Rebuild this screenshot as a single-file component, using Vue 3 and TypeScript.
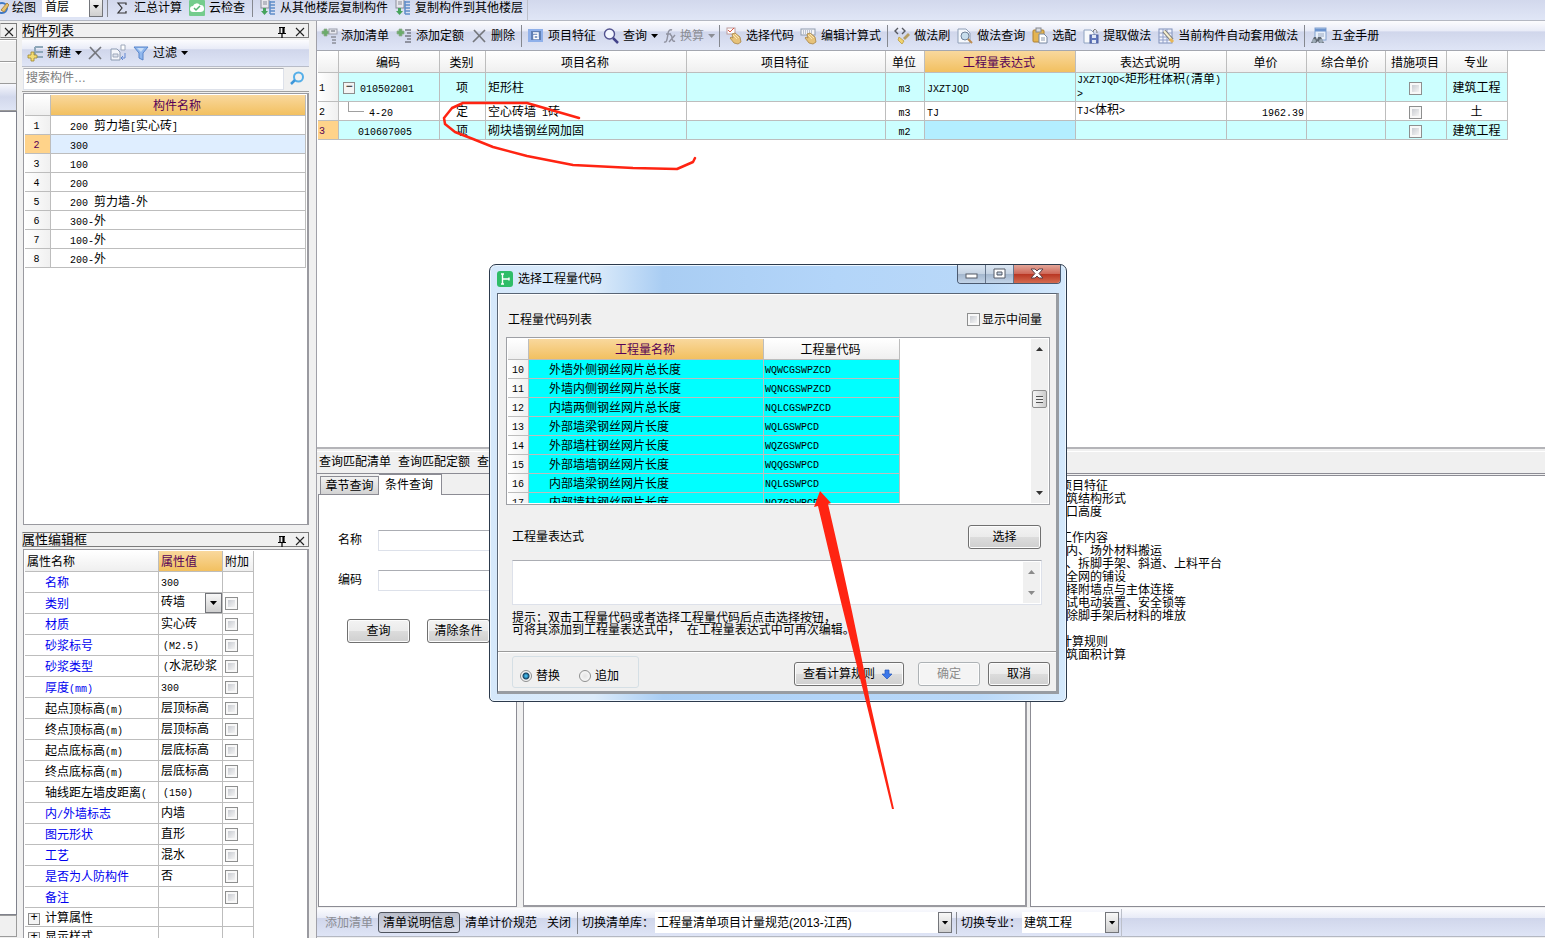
<script setup lang="ts">
import { h, ref } from 'vue'

const Mix = (props: { t: string }) =>
  h('span', { class: 'mix' }, props.t.split(/([\x20-\x7e]+)/).filter(Boolean).map((part) =>
    /^[\x20-\x7e]+$/.test(part) ? h('span', { class: 'lat' }, part) : part))
Mix.props = ['t']

const hand = '<path d="M6 6l3-1 5 4 1 5-3 2-4-1-4-5 1-1 2 1z" fill="#e6c27a" stroke="#a98545" stroke-width=".8"/><path d="M7 7l4 4M9 6l4 4" stroke="#fff0c8" stroke-width=".8"/>'
const plus = '<path d="M3 1h3v2h2v3h-2v2h-3v-2h-2v-3h2z" fill="#6bab6b" stroke="#8fae90" stroke-width=".7"/>'
const icons: Record<string, string> = {
  brush: '<circle cx="2" cy="8" r="5" fill="none" stroke="#3e78c4" stroke-width="2"/><path d="M1 10l6-7 2 2-5 7z" fill="#e8c36b" stroke="#a98447"/>',
  sigma: '<path d="M11 5v-2h-8l4 5-4 5h8v-2" fill="none" stroke="#333" stroke-width="1.2"/>',
  cloud: '<rect width="16" height="16" rx="1" fill="#74cc8d"/><path d="M4 12a3 3 0 0 1 0-6 4 4 0 0 1 7-1 3.500 3.500 0 0 1 1 7z" fill="#fff"/><path d="M5 8l2 2 4-4" fill="none" stroke="#55b573" stroke-width="1.500"/>',
  copyFloor: '<rect x="1" y="-1" width="8" height="9" fill="#e8e8ee" stroke="#8b8d99"/><path d="M3 2h4M3 4h4" stroke="#8b8d99"/><path d="M10 1v13M10 2h5M10 5h5M10 8h5M10 11h5M10 14h5" stroke="#5f8dc9" stroke-width="1.500"/><path d="M3 8h3v3h2l-3.500 4-3.500-4h2z" fill="#46a35c"/>',
  newItem: '<path d="M8 2h8M8 7h8M8 12h8M8 2v10" stroke="#8ea7b9" stroke-width="2" fill="none"/><path d="M4 7h3v3h3v3h-3v3h-3v-3h-3v-3h3z" fill="#f3dc72" stroke="#9c8730" stroke-width=".8"/>',
  cross: '<path d="M3 2l11 12M14 2l-12 12" stroke="#75777d" stroke-width="1.700" fill="none"/>',
  duplicate: '<path d="M1 4h6l3 3v8h-9z" fill="#f4f6fa" stroke="#8c9bb2"/><path d="M3 9h5v3h-5z" fill="#dfe4ee" stroke="#9da8ba"/><path d="M11 0h4v5h-4z" fill="#fff" stroke="#9da8ba"/><path d="M15 8v5h-3m1-2l-2 2 2 2" stroke="#6187d2" fill="none"/>',
  filter: '<path d="M1 2h14l-5 6v7l-4-2v-5z" fill="#91b8ee" stroke="#5885ca"/><path d="M4 3h7l-3 4z" fill="#c9def8"/>',
  search: '<circle cx="9.500" cy="6" r="4.500" fill="none" stroke="#54aee8" stroke-width="2"/><path d="M6 9l-4 4" stroke="#3d97da" stroke-width="2.500"/>',
  addList: plus + '<rect x="8" y="1" width="8" height="5" fill="#e7e8ef" stroke="#9a9dab"/><path d="M10 3h4M10 9h5M11 12h4M11 15h4" stroke="#8c8e99" stroke-width="1.500"/>',
  addQuota: plus + '<path d="M9 2h6M11 5h4M9 8h6M11 11h4M9 14h6" stroke="#777984" stroke-width="1.400"/>',
  feature: '<rect x="0" y="1" width="15" height="13" fill="#8fb0ea"/><rect x="3" y="3" width="10" height="9" fill="#5f7fb4"/><path d="M5 5h5v6M10 7.500h-4v3h5" stroke="#fff" stroke-width="1.500" fill="none"/>',
  magnify: '<circle cx="6.500" cy="6" r="5" fill="#f3f6ff" stroke="#52528f" stroke-width="1.400"/><path d="M10 10l5 5" stroke="#42428a" stroke-width="2.500"/>',
  fx: '<path d="M1 14c3 1 3-3 4-8 0-3 2-5 4-4M3 6h5M6 14l6-7M7 7c3-1 1 8 5 6" fill="none" stroke="#9092a0" stroke-width="1.400"/>',
  pick: '<rect x="1" y="0" width="8" height="6" fill="#fff" stroke="#bd9c9c"/><path d="M2 2l2 2 4-4" stroke="#dd5545" fill="none"/>' + hand,
  edit: '<rect x="0" y="1" width="14" height="6" fill="#f4f4f8" stroke="#8f9bad"/><path d="M2 3h10M2 5h10" stroke="#8392aa" stroke-dasharray="1 1"/>' + hand,
  code: '<path d="M4 0l-3 3 3 3M8 0l3 3-3 3" fill="none" stroke="#56585f" stroke-width="1.400"/><path d="M9 10l5-5 2 2-5 5z" fill="#b69e62"/><path d="M5 9l5 4-2 3-4-4z" fill="#f1d36f" stroke="#c4a852"/>',
  pageFind: '<path d="M1 1h8l4 4v10h-12z" fill="#f5f8fd" stroke="#8f9fb7"/><circle cx="8" cy="8" r="4" fill="#c7ddec" stroke="#6f8199"/><path d="M11 11l4 4" stroke="#be8c50" stroke-width="2"/>',
  clipboard: '<rect x="1" y="2" width="11" height="12" rx="1" fill="#e4b451" stroke="#af8131"/><rect x="4" y="0" width="5" height="4" fill="#d9dde4" stroke="#85878c"/><path d="M7 6h5l3 3v6h-8z" fill="#fff" stroke="#7787a0"/><path d="M9 10h4M9 12h4" stroke="#8c9ab0"/>',
  extract: '<path d="M1 2h7l3 3v10h-10z" fill="#f7f9fc" stroke="#8ea2c0"/><rect x="7" y="7" width="8" height="8" fill="#6278bd" stroke="#4b5e9d"/><path d="M9 7h4v3h-4zM9 12h4v3h-4z" fill="#dfe7f5"/><path d="M10 4c1-4 4-3 4 1M12 1l-2 2" fill="none" stroke="#777"/>',
  auto: '<rect x="1" y="1" width="13" height="14" fill="#f0f3fd" stroke="#7f8fba"/><path d="M1 5h13M1 9h13M1 12h13M5 1v14M9 1v14" stroke="#91a0c8"/><path d="M6 3l8 9" stroke="#777" stroke-width="4"/><path d="M6 3l8 9" stroke="#f7f0d0" stroke-width="2"/><path d="M12 11l3 3" stroke="#e7b758" stroke-width="3"/>',
  manual: '<rect x="4" y="0" width="11" height="12" fill="#e9f0fa" stroke="#82a1ce"/><path d="M4 2h11" stroke="#6d94cf" stroke-width="3"/><path d="M7 6h6M7 8h6" stroke="#99a9c2"/><path d="M0 15l3-6h2l1 3 1-3h3l3 6h-5l-1-2-2 2z" fill="#5f6872"/><circle cx="3" cy="13" r="2" fill="#9eabb7"/><circle cx="10" cy="13" r="2" fill="#9eabb7"/>',
  pin: '<path d="M5 3.500h6M6 3v6M10 3v6M9 3v6M4 9.500h8M8 10v4" stroke="#000" fill="none" stroke-width="1.200"/>',
  close: '<path d="M4 4l8 8M12 4l-8 8" stroke="#222" stroke-width="1.100" fill="none"/>',
  app: '<rect width="16" height="16" rx="3" fill="#2fbd68"/><path d="M4 3h3M5.500 3v10M4 13h3M6 8h6M12 6.500v3" stroke="#fff" stroke-width="1.400" fill="none"/>',
  down: '<path d="M6 4h4v4h3l-5 5-5-5h3z" fill="#3d78ea" stroke="#2456b8" stroke-width=".7"/>',
}
const Icon = (props: { n: string; w?: number }) =>
  h('svg', { class: 'icon', width: props.w || 16, height: 16, viewBox: `0 0 ${props.w || 16} 16`, 'aria-hidden': 'true', innerHTML: icons[props.n] })
Icon.props = ['n', 'w']

interface Tool { icon?: string; text?: string; drop?: boolean; off?: boolean; sep?: boolean; w?: number }
const sep: Tool = { sep: true }
const tools: Tool[] = [
  { icon: 'addList', text: '添加清单' }, { icon: 'addQuota', text: '添加定额' }, { icon: 'cross', text: '删除' }, sep,
  { icon: 'feature', text: '项目特征' }, { icon: 'magnify', text: '查询', drop: true }, { icon: 'fx', text: '换算', drop: true, off: true, w: 13 }, sep,
  { icon: 'pick', text: '选择代码' }, { icon: 'edit', text: '编辑计算式' }, sep,
  { icon: 'code', text: '做法刷' }, { icon: 'pageFind', text: '做法查询' }, { icon: 'clipboard', text: '选配' },
  { icon: 'extract', text: '提取做法' }, { icon: 'auto', text: '当前构件自动套用做法' }, sep,
  { icon: 'manual', text: '五金手册' },
]
const parts = ['200 剪力墙[实心砖]', '300', '100', '200', '200 剪力墙-外', '300-外', '100-外', '200-外']
const attrs: { n: string; v: string; blue?: boolean; kind?: string }[] = [
  { n: '名称', v: '300', blue: true, kind: 'plain' }, { n: '类别', v: '砖墙', blue: true, kind: 'select' },
  { n: '材质', v: '实心砖', blue: true }, { n: '砂浆标号', v: '(M2.5)', blue: true }, { n: '砂浆类型', v: '(水泥砂浆', blue: true },
  { n: '厚度(mm)', v: '300', blue: true }, { n: '起点顶标高(m)', v: '层顶标高' }, { n: '终点顶标高(m)', v: '层顶标高' },
  { n: '起点底标高(m)', v: '层底标高' }, { n: '终点底标高(m)', v: '层底标高' }, { n: '轴线距左墙皮距离(', v: '(150)' },
  { n: '内/外墙标志', v: '内墙', blue: true }, { n: '图元形状', v: '直形', blue: true }, { n: '工艺', v: '混水', blue: true },
  { n: '是否为人防构件', v: '否', blue: true }, { n: '备注', v: '', blue: true },
  { n: '计算属性', v: '', kind: 'group' }, { n: '显示样式', v: '', kind: 'group' },
]
const heads = ['编码', '类别', '项目名称', '项目特征', '单位', '工程量表达式', '表达式说明', '单价', '综合单价', '措施项目', '专业']
const items = [
  { code: '010502001', cls: '项', name: '矩形柱', unit: 'm3', ex: 'JXZTJQD', note: 'JXZTJQD<矩形柱体积(清单)>', price: '', major: '建筑工程' },
  { code: '4-20', cls: '定', name: '空心砖墙 1砖', unit: 'm3', ex: 'TJ', note: 'TJ<体积>', price: '1962.39', major: '土' },
  { code: '010607005', cls: '项', name: '砌块墙钢丝网加固', unit: 'm2', ex: '', note: '', price: '', major: '建筑工程' },
]
const codes = [
  ['外墙外侧钢丝网片总长度', 'WQWCGSWPZCD'], ['外墙内侧钢丝网片总长度', 'WQNCGSWPZCD'], ['内墙两侧钢丝网片总长度', 'NQLCGSWPZCD'],
  ['外部墙梁钢丝网片长度', 'WQLGSWPCD'], ['外部墙柱钢丝网片长度', 'WQZGSWPCD'], ['外部墙墙钢丝网片长度', 'WQQGSWPCD'],
  ['内部墙梁钢丝网片长度', 'NQLGSWPCD'], ['内部墙柱钢丝网片长度', 'NQZGSWPCD'],
]
const notes: { t: string; head?: boolean }[] = [
  { t: '一、项目特征', head: true }, { t: '1.建筑结构形式' }, { t: '2.檐口高度' }, { t: '' },
  { t: '二、工作内容', head: true }, { t: '1.场内、场外材料搬运' }, { t: '2.搭、拆脚手架、斜道、上料平台' }, { t: '3.安全网的铺设' },
  { t: '4.选择附墙点与主体连接' }, { t: '5.测试电动装置、安全锁等' }, { t: '6.拆除脚手架后材料的堆放' }, { t: '' },
  { t: '三、计算规则', head: true }, { t: '按建筑面积计算' },
]
const mode = ref('replace')
const expression = ref('')
</script>

<template>
  <div class="app">
    <header class="topbar">
      <div class="topgroup">
        <button class="tool first"><Icon n="brush" :w="9" />绘图</button>
        <div class="combo floor"><select aria-label="楼层"><option>首层</option></select><i class="arrow" /></div>
        <i class="sep" />
        <button class="tool"><Icon n="sigma" :w="15" />汇总计算</button>
        <button class="tool"><Icon n="cloud" />云检查</button>
        <i class="sep" />
        <button class="tool"><Icon n="copyFloor" />从其他楼层复制构件</button>
        <button class="tool"><Icon n="copyFloor" />复制构件到其他楼层</button>
      </div>
    </header>

    <div class="body">
      <aside class="strip">
        <div class="titlebar"><button class="mini" aria-label="关闭"><Icon n="close" /></button></div>
        <div class="box" /><div class="box" /><div class="band" /><div class="blank" /><div class="foot" />
      </aside>

      <aside class="side">
        <section class="panel parts">
          <div class="titlebar"><h2>构件列表</h2><button class="mini" aria-label="固定"><Icon n="pin" /></button><button class="mini" aria-label="关闭"><Icon n="close" /></button></div>
          <div class="bar sidebar">
            <button class="tool"><Icon n="newItem" />新建<i class="tri" /></button>
            <button class="tool" aria-label="删除"><Icon n="cross" /></button>
            <button class="tool" aria-label="复制"><Icon n="duplicate" /></button>
            <button class="tool"><Icon n="filter" />过滤<i class="tri" /></button>
          </div>
          <div class="find"><input type="text" placeholder="搜索构件…" aria-label="搜索构件"><button aria-label="搜索"><Icon n="search" /></button></div>
          <div class="sheet">
            <table class="partTable">
              <colgroup><col class="c26"><col></colgroup>
              <thead><tr><th /><th class="hot">构件名称</th></tr></thead>
              <tbody>
                <tr v-for="(p, i) in parts" :key="i" :class="{ sel: i === 1 }"><td class="num"><Mix :t="String(i + 1)" /></td><td class="ind"><Mix :t="p" /></td></tr>
              </tbody>
            </table>
          </div>
        </section>

        <section class="panel attrs">
          <div class="titlebar"><h2>属性编辑框</h2><button class="mini" aria-label="固定"><Icon n="pin" /></button><button class="mini" aria-label="关闭"><Icon n="close" /></button></div>
          <div class="sheet">
            <table class="attrTable">
              <colgroup><col class="c134"><col class="c64"><col class="c31"></colgroup>
              <thead><tr><th>属性名称</th><th class="hot">属性值</th><th>附加</th></tr></thead>
              <tbody>
                <tr v-for="p in attrs" :key="p.n" :class="p.kind">
                  <td class="an" :class="{ blue: p.blue }"><button v-if="p.kind === 'group'" class="expand" :aria-label="'展开' + p.n">+</button><Mix :t="p.n" /></td>
                  <td class="av">
                    <div v-if="p.kind === 'select'" class="combo cellcombo"><select aria-label="类别"><option>{{ p.v }}</option></select><i class="arrow" /></div>
                    <Mix v-else :t="p.v" :class="{ paren: p.v.startsWith('(') }" />
                  </td>
                  <td class="ck"><input v-if="p.kind !== 'plain' && p.kind !== 'group'" type="checkbox" :aria-label="p.n + '附加'"></td>
                </tr>
              </tbody>
            </table>
          </div>
        </section>
      </aside>

      <main class="main">
        <div class="bar maintools">
          <template v-for="(t, i) in tools" :key="i">
            <i v-if="t.sep" class="sep" />
            <button v-else class="tool" :disabled="t.off"><Icon :n="t.icon" :w="t.w" />{{ t.text }}<i v-if="t.drop" class="tri" /></button>
          </template>
        </div>
        <div class="gridpane">
          <table class="itemTable">
            <colgroup><col class="c21"><col class="c101"><col class="c46"><col class="c201"><col class="c199"><col class="c39"><col class="c151"><col class="c151"><col class="c80"><col class="c79"><col class="c61"><col class="c61"></colgroup>
            <thead><tr><th /><th v-for="x in heads" :key="x" :class="{ hot: x === '工程量表达式' }">{{ x }}</th></tr></thead>
            <tbody>
              <tr v-for="(r, i) in items" :key="r.code" :class="{ cy: i !== 1, tall: i === 0 }">
                <td class="num left" :class="{ now: i === 2 }"><Mix :t="String(i + 1)" /></td>
                <td class="tree"><div><button v-if="i === 0" class="expand" aria-label="折叠">−</button><i v-if="i === 1" class="branch" /><Mix :t="r.code" /></div></td>
                <td class="mid">{{ r.cls }}</td>
                <td><Mix :t="r.name" /></td><td />
                <td class="mid"><Mix :t="r.unit" /></td>
                <td :class="{ active: i === 2 }"><Mix :t="r.ex" /></td>
                <td class="wrap"><Mix :t="r.note" /></td>
                <td class="right"><Mix :t="r.price" /></td><td />
                <td class="mid"><input type="checkbox" :aria-label="r.name + '措施项目'"></td>
                <td class="mid">{{ r.major }}</td>
              </tr>
            </tbody>
          </table>
        </div>

        <section class="lower">
          <nav class="querynav"><button>查询匹配清单</button><button>查询匹配定额</button><button>查询清单库</button></nav>
          <div class="panes">
            <div class="querypane">
              <div class="tabs" role="tablist"><button role="tab">章节查询</button><button role="tab" class="on" aria-selected="true">条件查询</button></div>
              <form class="query" @submit.prevent>
                <label>名称<input type="text"></label>
                <label>编码<input type="text"></label>
                <div class="acts"><button class="btn">查询</button><button class="btn">清除条件</button></div>
              </form>
            </div>
            <div class="pane result" />
            <div class="pane notes"><p v-for="(n, i) in notes" :key="i" :class="{ head: n.head }"><Mix :t="n.t" /></p></div>
          </div>
        </section>

        <footer class="bar bottom">
          <button class="tool" disabled>添加清单</button>
          <button class="tool pressed">清单说明信息</button>
          <button class="tool">清单计价规范</button>
          <button class="tool closebtn">关闭</button>
          <i class="sep" />
          <label for="lib">切换清单库：</label>
          <div class="combo lib"><select id="lib"><option>工程量清单项目计量规范(2013-江西)</option></select><i class="arrow" /></div>
          <i class="sep" />
          <label for="major">切换专业：</label>
          <div class="combo major"><select id="major"><option>建筑工程</option></select><i class="arrow" /></div>
          <i class="endline" />
        </footer>
      </main>
    </div>

    <div class="dialog" role="dialog" aria-label="选择工程量代码">
      <div class="caption">
        <Icon n="app" /><span>选择工程量代码</span>
        <div class="winbtns">
          <button aria-label="最小化"><svg width="14" height="12"><rect x="1" y="6" width="11" height="4" fill="#fff" stroke="#555b66" /></svg></button>
          <button aria-label="最大化"><svg width="14" height="12"><path d="M1 1h11v9h-11zM4 4h5v3h-5z" fill="#fff" fill-rule="evenodd" stroke="#555b66" /></svg></button>
          <button class="x" aria-label="关闭"><svg width="14" height="12"><path d="M1 1h4l2 2 2-2h4l-4 4.500 4 4.500h-4l-2-2-2 2h-4l4-4.500z" fill="#fff" stroke="#5b4148" /></svg></button>
        </div>
      </div>
      <div class="content">
        <div class="listhead"><span>工程量代码列表</span><label><input type="checkbox">显示中间量</label></div>
        <div class="codebox">
          <div class="codes">
            <table class="codeTable">
              <colgroup><col class="c21"><col class="c235"><col class="c136"></colgroup>
              <thead><tr><th /><th class="hot">工程量名称</th><th>工程量代码</th></tr></thead>
              <tbody><tr v-for="(c, i) in codes" :key="i"><td class="num"><Mix :t="String(i + 10)" /></td><td class="ind">{{ c[0] }}</td><td class="code"><Mix :t="c[1]" /></td></tr></tbody>
            </table>
          </div>
          <div class="scroll"><i class="up" /><i class="thumb" /><i class="dn" /></div>
        </div>
        <div class="exprow"><label for="expr">工程量表达式</label><button class="btn">选择</button></div>
        <div class="exprbox"><textarea id="expr" v-model="expression" /><div class="scroll dim"><i class="up" /><i class="dn" /></div></div>
        <p class="hint">提示：双击工程量代码或者选择工程量代码后点击选择按钮，<br>可将其添加到工程量表达式中，&nbsp; 在工程量表达式中可再次编辑。</p>
        <div class="dialogfoot">
          <div class="radios">
            <label><input v-model="mode" type="radio" name="mode" value="replace">替换</label>
            <label><input v-model="mode" type="radio" name="mode" value="append">追加</label>
          </div>
          <button class="btn rules">查看计算规则<Icon n="down" /></button>
          <button class="btn ok" disabled>确定</button>
          <button class="btn cancel">取消</button>
        </div>
      </div>
    </div>

    <svg class="ink" width="1545" height="938" viewBox="0 0 1545 938" aria-hidden="true">
      <path d="M579 118L527 103L463 103L452 108L444 118L445 124L455 132L473 139L493 147L527 156L573 165L633 168L677 169L693 162L695 158" fill="none" stroke="#ff2412" stroke-width="2.500" stroke-linecap="round" stroke-linejoin="round" />
      <path d="M820 491L831 503L828 504Q855 620 870 702L894 809L892 809L866 702Q840 600 818 506L814 507Z" fill="#ff2412" />
    </svg>
  </div>
</template>

<style>
html, body { margin: 0; background: #f0f0f0; }
</style>

<style scoped>
.app { position: relative; height: 100vh; overflow: hidden; display: flex; flex-direction: column; background: #f0f0f0; color: #000; font: 12px/16px "Liberation Sans", "Noto Sans CJK SC", sans-serif; }
.app * { box-sizing: border-box; }
button, input, select, textarea { font: inherit; color: inherit; margin: 0; padding: 0; border: 0; background: none; border-radius: 0; }
h2, p { margin: 0; font: inherit; }
:deep(.lat) { font: 10px/12px "Liberation Mono", monospace; white-space: pre-wrap; }
:deep(.icon) { flex: none; overflow: visible; }
.app > .topbar :deep(.icon) { overflow: hidden; }

.topbar { flex: none; height: 21px; background: linear-gradient(#d2d8ec, #e0e6f6); border-bottom: 1px solid #b4b8c2; }
.topgroup { height: 20px; width: max-content; padding-bottom: 4px; padding-right: 4px; display: flex; align-items: center; gap: 7px; border-right: 1px solid #bcc0ca; }
.tool { display: flex; align-items: center; gap: 4px; white-space: nowrap; }
.tool:disabled { color: #8b8d94; }
.first { gap: 3px; }
.sep { flex: none; width: 1px; height: 22px; margin: 0 -1px; background: #85888f; }
.topbar .sep { height: 18px; margin: 0; }
.tri { width: 7px; height: 4px; margin-right: -2px; background: currentColor; clip-path: polygon(0 0, 100% 0, 50% 100%); }
.combo { display: grid; grid-template-columns: 1fr 14px; background: #fff; }
.combo select { grid-area: 1 / 1 / 2 / 3; appearance: none; min-width: 0; padding-left: 3px; outline: 0; }
.arrow { grid-area: 1 / 2; pointer-events: none; border: 1px solid #73757a; background: linear-gradient(#f8f8f8, #cfcfcf); display: grid; place-items: center; }
.arrow::after { content: ""; width: 7px; height: 4px; background: #000; clip-path: polygon(0 0, 100% 0, 50% 100%); }
.floor { width: 61px; height: 21px; align-self: flex-end; margin-bottom: -1px; margin-left: -1px; margin-right: -3px; }

.body { flex: 1; min-height: 0; display: flex; }
.strip { flex: none; width: 17px; padding-top: 2px; margin-right: 5px; display: flex; flex-direction: column; }
.titlebar { flex: none; height: 15px; display: flex; align-items: center; border: 1px solid #7b7b7b; border-left-color: #d8d8d8; }
.titlebar h2 { flex: 1; line-height: 13px; font-size: 13px; margin-left: -1px; }
.mini { display: grid; place-items: center; width: 16px; height: 13px; margin-left: 2px; }
.strip .mini { margin-left: 0; }
.box { height: 22px; border: solid #9b9b9b; border-width: 1px 1px 0 0; box-shadow: inset 0 1px #fff; }
.strip .titlebar + .box { margin-top: 1px; }
.band { height: 28px; border: solid #9b9b9b; border-width: 1px 1px 1px 0; background: linear-gradient(#f7f8fd, #d2d8ec 50%, #dfe5f5); }
.blank { flex: 1; background: #fff; border: solid #80828c; border-width: 1px 1px 1px 0; }
.foot { height: 22px; margin-bottom: 1px; border: solid #9b9b9b; border-width: 1px 1px 1px 0; }

.side { flex: none; width: 287px; padding-top: 2px; display: flex; flex-direction: column; gap: 7px; }
.panel { min-height: 0; display: flex; flex-direction: column; }
.parts { flex: 502 1 0; }
.attrs { flex: 406 1 0; }
.bar { flex: none; display: flex; align-items: center; gap: 7px; background: linear-gradient(#fcfcfe, #e8ebf7 35%, #d0d6eb 37%, #dfe5f6); }
.sidebar { height: 27px; margin-top: 2px; padding-left: 5px; border-bottom: 1px solid #b8bcc8; }
.find { flex: none; height: 25px; display: flex; border-bottom: 1px solid #a0a0a0; padding: 1px 0 1px 1px; }
.find input { flex: 1; min-width: 0; background: #fff; border: 1px solid #dde1ea; border-top-color: #abadb3; padding: 0 0 2px 2px; outline: 0; }
.find input::placeholder { color: #7c7c7c; opacity: 1; }
.find button { width: 25px; display: grid; place-items: center; }
.sheet { flex: 1; min-height: 0; overflow: hidden; margin-left: 1px; padding: 1px 1px 0 1px; background: #fff; border: solid #9a9aa0; border-width: 1px 2px 1px 1px; }
.parts .sheet { margin-top: 1px; }
.attrs .sheet { margin-top: 2px; border-bottom: 0; }

table { table-layout: fixed; border-collapse: separate; border-spacing: 0; background: #fff; }
td, th { height: 19px; padding: 1px 1px 0 2px; border: solid #bdbdbd; border-width: 0 1px 1px 0; font-weight: normal; line-height: 16px; text-align: left; white-space: nowrap; overflow: hidden; }
th { height: 21px; padding: 2px 2px 0 0; background: linear-gradient(#fff, #efefef); text-align: center; }
th.hot { background: linear-gradient(#f9d89d, #f2c060); color: #560056; }
.num { padding: 0 2px 0 0; text-align: center; background: linear-gradient(90deg, #fff, #f0f0f0); }
.num.left { text-align: left; padding-left: 1px; }
.ind { padding-left: 19px; }
.partTable { width: 100%; }
.sel td { background: #dfeeff; }
.sel .num, .num.now { background: #ffd38a; color: #560056; }
.attrTable { width: 229px; }
.attrTable th { text-align: left; padding: 1px 1px 0 2px; }
.attrTable td { height: 21px; padding-top: 2px; }
.attrTable .av { padding-top: 0; }
.attrTable .group td { height: 19px; }
.attrTable .an { padding-left: 20px; }
.attrTable .group .an { padding-left: 3px; }
.blue { color: #0000f0; }
.paren { margin-left: 2px; }
.attrTable .ck { line-height: 12px; padding-top: 0; }
.expand { width: 12px; height: 12px; margin-right: 5px; padding: 0; border: 1px solid #8d8d8d; background: #f4f4f4; font: 12px/9px "Liberation Mono", monospace; vertical-align: middle; }
.cellcombo { height: 20px; grid-template-columns: 1fr 17px; margin: 0 -1px 0 -2px; }
.cellcombo select { padding: 0 0 2px 2px; }
input[type="checkbox"] { appearance: none; flex: none; width: 13px; height: 13px; border: 1px solid #8e8f8f; background: linear-gradient(135deg, #c9ccd2, #f4f4f4) content-box, #f8f8f8; padding: 2px; vertical-align: middle; }

.main { flex: 1; min-width: 0; margin-left: 7px; display: flex; flex-direction: column; border-left: 1px solid #a0a0a8; }
.maintools { height: 30px; padding-left: 4px; padding-top: 1px; border-bottom: 1px solid #a4a7b0; }
.gridpane { flex: 397 1 0; min-height: 0; padding-left: 1px; background: #fff; border-bottom: 2px solid #b4b4b8; overflow: hidden; }
.itemTable { width: 1190px; }
.itemTable th { height: 22px; }
.cy td:not(.num) { background: #ccffff; }
.cy td.active { background: #b3eeff; }
.tall td { height: 29px; }
.mid { text-align: center; padding: 1px 1px 0 0; }
.right { text-align: right; padding-right: 2px; }
td.wrap { white-space: normal; word-break: break-all; line-height: 12px; padding: 0 0 0 1px; }
.tree { padding-top: 1px; }
.tree div { display: flex; align-items: center; padding-left: 17px; }
.tree .expand { margin: 0 5px 0 -15px; }
.tree .branch { width: 16px; height: 10px; margin: -9px 5px 0 -10px; border: solid #a0a0a0; border-width: 0 0 1px 1px; }

.lower { flex: 459 1 0; min-height: 0; padding-top: 2px; display: flex; flex-direction: column; }
.querynav { flex: none; height: 22px; border-top: 1px solid #fff; padding-left: 2px; display: flex; gap: 7px; align-items: center; }
.panes { flex: 1; min-height: 0; display: flex; border-top: 1px solid #8c8c94; padding: 1px 0 1px 1px; }
.querypane { flex: none; width: 199px; display: flex; flex-direction: column; }
.tabs { flex: none; height: 19px; display: flex; align-items: flex-end; padding-left: 2px; }
.tabs button { width: 59px; height: 18px; padding-top: 1px; border: 1px solid #8c8c94; border-bottom: 0; background: linear-gradient(#f2f2f2, #d3d3d3); line-height: 16px; }
.tabs .on { position: relative; width: 63px; height: 21px; margin-bottom: -1px; padding: 0 2px 0 0; border-left: 0; background: #fff; }
.query { flex: 1; border: 1px solid #8c8c94; background: #fff; padding: 35px 0 0 19px; display: flex; flex-direction: column; gap: 19px; overflow: hidden; }
.query label { display: flex; align-items: center; gap: 16px; }
.query input { flex: 1; min-width: 0; height: 21px; border: 1px solid #dde1ea; border-top-color: #abadb3; }
.acts { display: flex; gap: 17px; padding: 9px 0 0 9px; }
.btn { height: 24px; border: 1px solid #707070; border-radius: 3px; box-shadow: inset 0 0 0 1px #fcfcfc; background: linear-gradient(#f3f3f3, #ebebeb 50%, #dcdcdc 51%, #cfcfcf); white-space: nowrap; }
.btn:disabled { color: #8b8b8b; border-color: #adb2b5; background: #f4f4f4; }
.acts .btn { flex: none; width: 63px; }
.pane { background: #fff; border: 1px solid #8c8c94; }
.result { flex: none; width: 504px; margin: 0 3px 0 6px; border-width: 1px 2px 2px 1px; border-color: #9a9aa0; }
.notes { flex: 1; min-width: 0; padding: 4px 0 0 11px; border-right: 0; }
.notes p { height: 13px; line-height: 13px; }
.notes .head { margin-left: -6px; }

.bottom { height: 29px; margin-bottom: 1px; padding: 1px 0 0 8px; gap: 5px; border-bottom: 1px solid #b4b8c2; }
.pressed { height: 21px; padding: 0 4px; border: 1px solid #4f545e; border-radius: 3px; background: linear-gradient(#b9bdca, #dadde8); }
.closebtn { margin-left: 5px; }
.bottom .sep { margin: 0 -1px 0 1px; }
.bottom .combo { height: 21px; margin-left: -4px; }
.bottom .combo select { padding-left: 2px; }
.lib { width: 297px; }
.lib + .sep { margin-left: -1px; }
.major { width: 97px; }
.bottom .endline { width: 1px; height: 28px; margin-left: -3px; background: #bcc0ca; }

.dialog { position: absolute; left: 489px; top: 264px; width: 578px; padding: 0 7px 7px; border: 1px solid #2c3a4c; border-radius: 7px 7px 5px 5px; background: linear-gradient(90deg, #d5e8fb, #dcebfa 18%, #a9cdf3 30%, #b3d5f9 60%, #b9d8f8 85%, #d5e9fc); box-shadow: inset 0 0 0 1px #eef7ff; }
.caption { height: 28px; display: flex; align-items: center; gap: 5px; }
.winbtns { align-self: flex-start; margin: 0 -2px 0 auto; display: flex; border: 1px solid #4b5a70; border-top: 0; border-radius: 0 0 4px 4px; overflow: hidden; }
.winbtns button { width: 28px; height: 18px; display: grid; place-items: center; border-right: 1px solid #65758b; background: linear-gradient(#dce7f3, #c5d3e3 48%, #a4b7ce 52%, #c2d4e8); }
.winbtns .x { width: 46px; border: 0; background: linear-gradient(#e3a699, #cf695a 48%, #b93724 52%, #d46b50); }
.content { border: 1px solid #596575; border-right: 3px solid #989ca2; border-bottom: 3px solid #989ca2; background: #f0f0f0; box-shadow: inset 1px 1px #fff; }
.listhead { height: 43px; padding: 8px 14px 0 10px; display: flex; justify-content: space-between; align-items: center; }
.listhead label { display: flex; align-items: center; gap: 2px; }
.codebox { height: 168px; margin: 0 6px 0 8px; padding: 1px; display: flex; border: 1px solid #9ea0a5; background: #fff; }
.codes { flex: 1; min-width: 0; overflow: hidden; }
.codeTable { width: 392px; }
.codeTable .num { padding: 0; }
.codeTable td:not(.num) { background: #00ffff; }
.codeTable .ind { padding-left: 20px; padding-top: 2px; }
.codeTable .code { padding-left: 1px; padding-top: 0; }
.scroll { flex: none; width: 17px; padding: 8px 0; display: flex; flex-direction: column; align-items: center; background: #f0f0f0; }
.up, .dn { width: 7px; height: 4px; background: #333; clip-path: polygon(50% 0, 100% 100%, 0 100%); }
.dn { margin-top: auto; clip-path: polygon(0 0, 100% 0, 50% 100%); }
.dim .up, .dim .dn { background: #8b8b8b; }
.thumb { width: 15px; height: 18px; margin-top: 39px; border: 1px solid #8e8e8e; border-radius: 2px; background: repeating-linear-gradient(#555 0 1px, #eee 1px 3px) center / 7px 7px no-repeat, linear-gradient(90deg, #f5f5f5, #ccc); }
.exprow { height: 55px; padding: 8px 15px 0 14px; display: flex; align-items: center; justify-content: space-between; }
.exprow .btn { width: 73px; }
.exprbox { height: 45px; margin: 0 14px; display: flex; padding: 1px; border: 1px solid #dde1ea; border-top-color: #abadb3; background: #fff; }
.exprbox textarea { flex: 1; resize: none; outline: 0; }
.hint { margin: 7px 0 15px 14px; line-height: 12px; white-space: nowrap; }
.dialogfoot { height: 40px; border-top: 1px solid #9b9b9b; box-shadow: inset 0 1px #fff; padding: 4px 6px 3px 14px; display: flex; align-items: center; }
.dialogfoot .btn { margin-top: 4px; }
.radios { width: 127px; height: 32px; padding: 8px 0 0 7px; display: flex; gap: 19px; border: 1px solid #d5dfe5; border-radius: 3px; }
.radios label { display: flex; align-items: center; gap: 4px; }
.radios input { appearance: none; width: 12px; height: 12px; border: 1px solid #8e8f8f; border-radius: 50%; background: radial-gradient(#e4e4e4, #fff); }
.radios input:checked { background: radial-gradient(circle, #3fb4e6 0 1px, #17415f 3px, #f4f4f4 4px); }
.rules { margin-left: auto; width: 110px; display: flex; align-items: center; justify-content: center; gap: 4px; }
.ok { width: 62px; margin-left: 14px; }
.cancel { width: 62px; margin-left: 8px; }
.ink { position: absolute; left: 0; top: 0; pointer-events: none; }

.c21 { width: 21px; } .c26 { width: 26px; } .c31 { width: 31px; } .c39 { width: 39px; } .c46 { width: 46px; }
.c61 { width: 61px; } .c64 { width: 64px; } .c79 { width: 79px; } .c80 { width: 80px; } .c101 { width: 101px; }
.c134 { width: 134px; } .c136 { width: 136px; } .c151 { width: 151px; } .c199 { width: 199px; } .c201 { width: 201px; } .c235 { width: 235px; }
</style>
